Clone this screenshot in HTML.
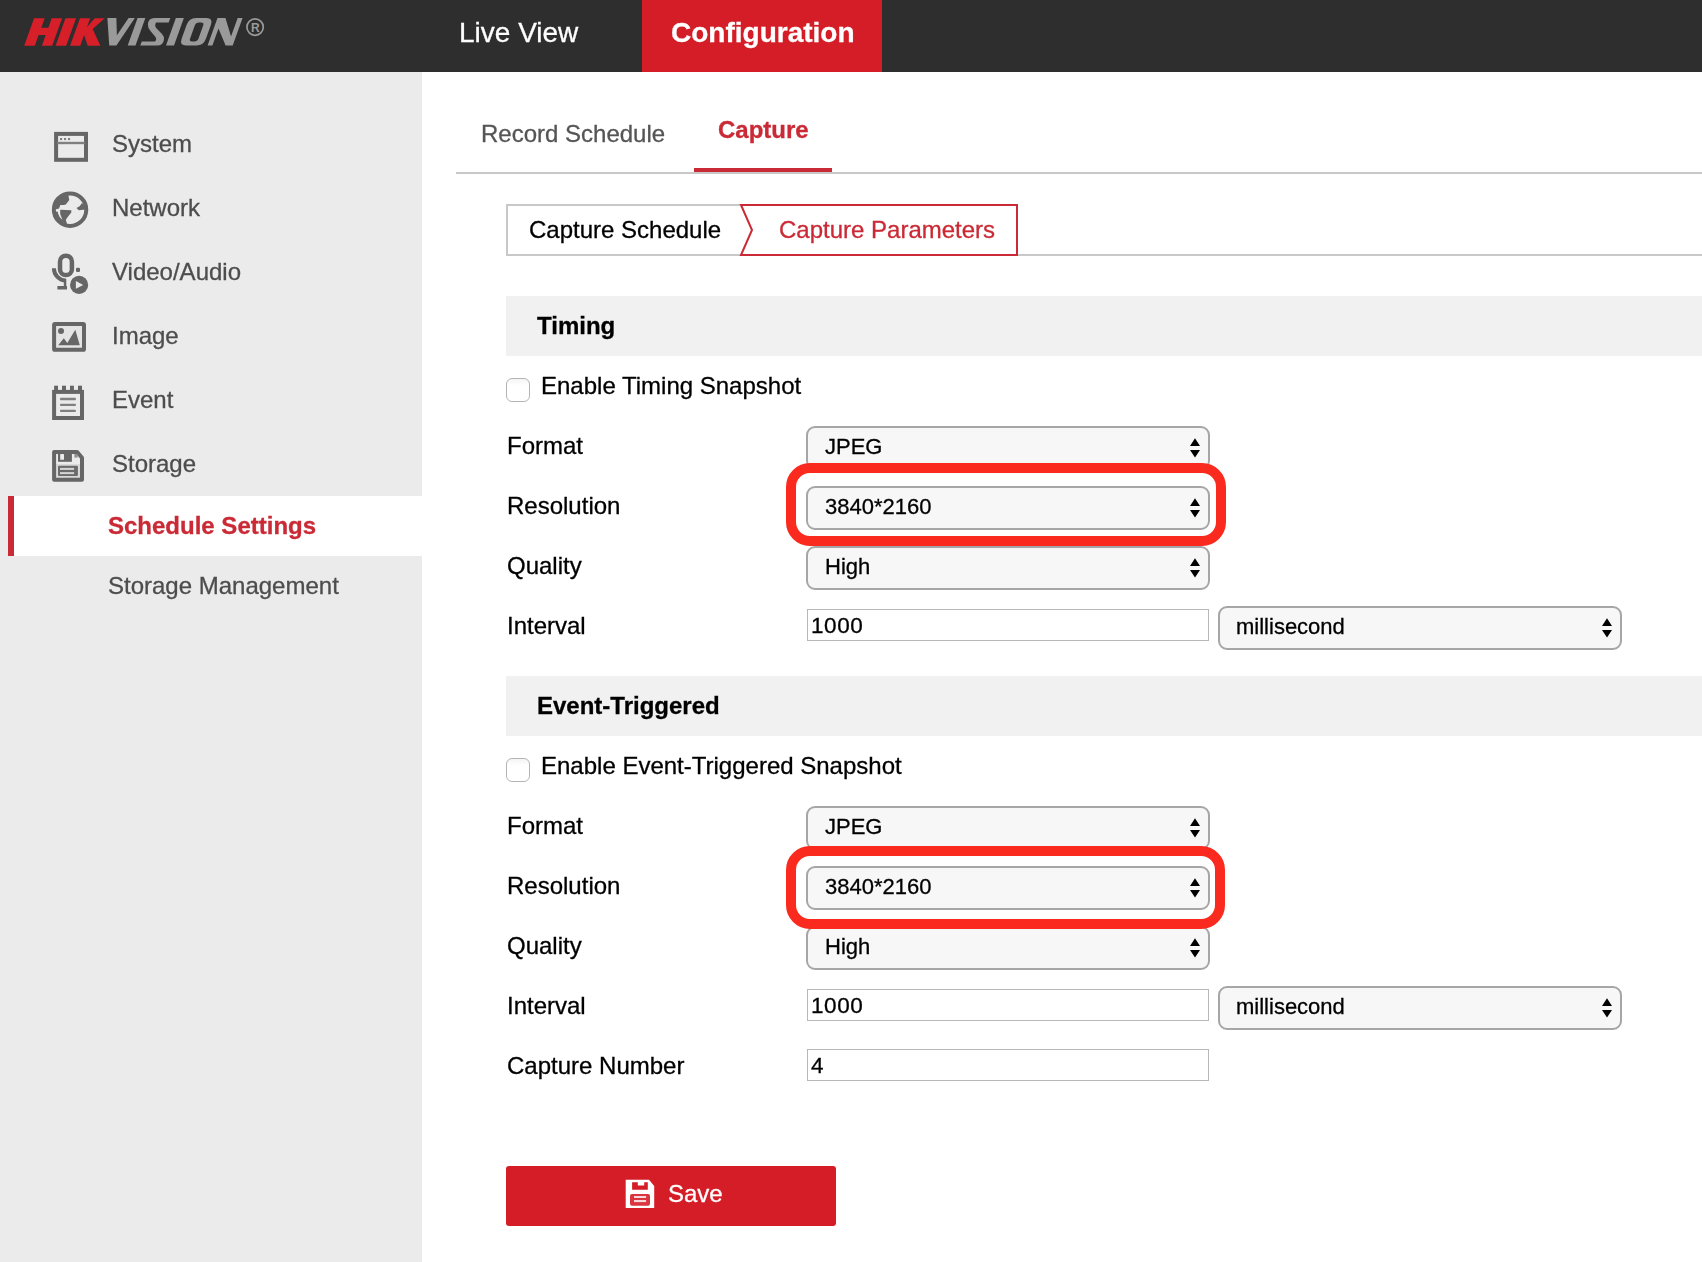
<!DOCTYPE html>
<html>
<head>
<meta charset="utf-8">
<title>Configuration</title>
<style>
*{box-sizing:border-box;margin:0;padding:0}
html,body{width:1702px;height:1262px;overflow:hidden;background:#fff}
body{font-family:"Liberation Sans",sans-serif;font-size:24px;color:#000;position:relative;-webkit-text-stroke:0.3px currentColor}
.abs{position:absolute}
.t{position:absolute;white-space:nowrap;line-height:30px;height:30px;will-change:transform}
.select .v,.input .v{will-change:transform}
#header{left:0;top:0;width:1702px;height:72px;background:#2e2e2e}
#cfgtab{left:642px;top:0;width:240px;height:72px;background:#d51d27}
#side{left:0;top:72px;width:422px;height:1190px;background:#ebebeb}
.nav{font-size:28px;color:#fff;line-height:34px;height:34px}
.sm{color:#4d4d4d}
.sel{left:14px;top:496px;width:408px;height:60px;background:#fff}
.selbar{left:8px;top:496px;width:6px;height:60px;background:#ca2a35}
.sec{left:506px;width:1196px;height:60px;background:#f1f1f1}
.sech{font-weight:bold;left:537px}
.lab{left:507px}
.select{position:absolute;height:44px;width:404px;border:2px solid #a6a6a6;border-radius:9px;background:#f7f7f7}
.select .v{position:absolute;left:17px;top:5px;font-size:22px;line-height:28px;white-space:nowrap}
.select svg{position:absolute;right:7px;top:10px}
.input{position:absolute;left:807px;width:402px;height:32px;border:1px solid #b8b8b8;background:#fff}
.input .v{position:absolute;left:2.5px;top:2px;font-size:22.5px;line-height:28px;letter-spacing:0.6px}
.cb{position:absolute;left:506px;width:24px;height:24px;border:1.5px solid #b4b4b4;border-radius:6px;background:linear-gradient(#f4f4f4,#fff 30%,#fff)}
.hl{position:absolute;left:786px;width:440px;height:83px;border:10px solid #fa2a1e;border-radius:24px}
</style>
</head>
<body>
<!-- header -->
<div id="header" class="abs"></div>
<div id="cfgtab" class="abs"></div>
<svg class="abs" style="left:0;top:0" width="300" height="72" viewBox="0 0 300 72">
  <g transform="matrix(1 0 0.359 -1 0 45.7)" fill="#d71f2a">
    <path d="M24.2 0 H34.8 V10.6 H41.9 V0 H52.2 V27.5 H41.9 V18 H34.8 V27.5 H24.2 Z"/>
    <path d="M55.6 0 H66.2 V27.5 H55.6 Z"/>
    <path d="M70.1 0 H80.3 V10.6 L87.7 0 H100.4 L86.7 16.6 L94.8 27.5 H84.9 L80.3 18.7 V27.5 H70.1 Z"/>
  </g>
  <g transform="matrix(1 0 0.359 -1 0 45.6)" fill="#9a9a9a">
    <path d="M97.5 27.5 H106.5 L113.2 10.3 L118.7 27.5 H125 L116.4 0 H109.25 Z"/>
    <path d="M127.7 0 H135.5 V27.5 H127.7 Z"/>
    <path d="M166 0 H174 V27.5 H166 Z"/>
    <path fill-rule="evenodd" d="M186.2 0 H196.5 Q203.5 0 203.5 7 V20.5 Q203.5 27.5 196.5 27.5 H186.2 Q179.2 27.5 179.2 20.5 V7 Q179.2 0 186.2 0 Z M190.6 4 Q187.6 4 187.6 7 V20 Q187.6 23 190.6 23 H193 Q196 23 196 20 V7 Q196 4 193 4 Z"/>
    <path d="M207.6 0 H212.4 V17 L225.6 0 H232.7 V27.5 H227.8 V9 L215.6 27.5 H207.6 Z"/>
  </g>
  <path fill="#9a9a9a" d="M170.3 18.1 L154.5 18.1 Q148.5 18.1 147.9 24.5 Q147.7 28 150.5 31 L155.5 36.9 Q157 39.5 155 41.6 L141.8 41.6 L140.2 45.6 L157 45.6 Q163.5 45.6 164 39 Q164.2 36.5 162 34 L156.1 27.9 Q154.3 25 156.1 22.6 L168.7 22.6 Z"/>
  <circle cx="255.1" cy="27.1" r="8.2" fill="none" stroke="#9a9a9a" stroke-width="1.7"/>
  <text x="255.4" y="31.9" text-anchor="middle" font-family="Liberation Sans" font-weight="bold" font-size="12" fill="#9a9a9a">R</text>
</svg>
<div class="t nav" style="left:459px;top:16px">Live View</div>
<div class="t nav" style="left:671px;top:16px;font-weight:bold">Configuration</div>

<!-- sidebar -->
<div id="side" class="abs"></div>
<div class="sel abs"></div><div class="selbar abs"></div>
<div class="t sm" style="left:112px;top:129px">System</div>
<div class="t sm" style="left:112px;top:193px">Network</div>
<div class="t sm" style="left:112px;top:257px">Video/Audio</div>
<div class="t sm" style="left:112px;top:321px">Image</div>
<div class="t sm" style="left:112px;top:385px">Event</div>
<div class="t sm" style="left:112px;top:449px">Storage</div>
<div class="t" style="left:108px;top:511px;font-weight:bold;color:#ca2a35">Schedule Settings</div>
<div class="t sm" style="left:108px;top:571px">Storage Management</div>

<!-- icons -->
<svg class="abs" style="left:40px;top:120px" width="60" height="50" viewBox="0 0 60 50">
  <rect x="16.1" y="13.9" width="29.9" height="25.9" fill="none" stroke="#666" stroke-width="4"/>
  <rect x="17" y="21.8" width="28" height="2.4" fill="#808080"/>
  <rect x="20" y="18" width="2.1" height="2.1" fill="#808080"/><rect x="24" y="18" width="2.1" height="2.1" fill="#808080"/><rect x="28" y="18" width="2.1" height="2.1" fill="#808080"/>
</svg>
<svg class="abs" style="left:40px;top:184px" width="60" height="50" viewBox="0 0 60 50">
  <circle cx="30.05" cy="25.7" r="16.2" fill="none" stroke="#666" stroke-width="4"/>
  <path d="M28 9.5 L29.3 15.9 L25.8 20.6 L23.6 21 L20.4 21 L19 24.6 L15 25.6 L14 28 L13 22 L16 14 L22 10 Z" fill="#666"/>
  <path d="M20.2 25.8 L31.3 26.2 L31.3 28.5 L27.7 32.9 L25.8 35.7 L27.2 40.5 L23.8 39.5 L20.2 30.1 Z" fill="#666"/>
  <path d="M16.48 27.61 A13.7 13.7 0 0 0 23.20 37.56" fill="none" stroke="#666" stroke-width="2.3"/>
  <path d="M36.5 24 L39.6 22.2 L42 19 L45 22 L45.5 25.6 L38.8 26.3 Z" fill="#666"/>
</svg>
<svg class="abs" style="left:40px;top:248px" width="60" height="50" viewBox="0 0 60 50">
  <rect x="20" y="7.7" width="11.9" height="19.4" rx="5.95" fill="none" stroke="#666" stroke-width="4.5"/>
  <path d="M13.9 20.2 A11.9 12.2 0 0 0 25.8 32.4" fill="none" stroke="#666" stroke-width="4"/>
  <path d="M23.8 31 H26.3 V38 H27 V41.6 H17.4 V38 H23.8 Z" fill="#666"/>
  <rect x="36" y="19.8" width="4" height="4.3" rx="1.3" fill="#666"/>
  <circle cx="39.1" cy="36.9" r="10.6" fill="#ebebeb"/>
  <circle cx="39.1" cy="36.9" r="9.1" fill="#666"/>
  <path d="M35.9 32.9 L43.2 36.9 L35.9 40.8 Z" fill="#ebebeb"/>
</svg>
<svg class="abs" style="left:40px;top:312px" width="60" height="50" viewBox="0 0 60 50">
  <rect x="14.1" y="11.9" width="29.9" height="25.9" rx="0.9" fill="#e4e4e4" stroke="#666" stroke-width="4"/>
  <circle cx="21" cy="19" r="3" fill="#666"/>
  <path d="M18.2 33.3 L23.8 26.2 L27.3 30.9 L35.3 17.8 L39.8 33.3 Z" fill="#666"/>
</svg>
<svg class="abs" style="left:40px;top:376px" width="60" height="50" viewBox="0 0 60 50">
  <rect x="14.1" y="15.9" width="27.9" height="26.1" fill="none" stroke="#666" stroke-width="4"/>
  <rect x="14.1" y="9.7" width="3.9" height="5" fill="#666"/><rect x="22" y="9.7" width="4" height="5" fill="#666"/><rect x="30" y="9.7" width="3.9" height="5" fill="#666"/><rect x="38" y="9.7" width="4" height="5" fill="#666"/>
  <rect x="20" y="21.8" width="15.9" height="2.4" rx="0.8" fill="#808080"/><rect x="20" y="27.7" width="15.9" height="2.4" rx="0.8" fill="#808080"/><rect x="20" y="33.8" width="15.9" height="2.3" rx="0.8" fill="#808080"/>
</svg>
<svg class="abs" style="left:40px;top:440px" width="60" height="50" viewBox="0 0 60 50">
  <path d="M15.9 24 H40 V38 H15.9 Z" fill="#d9d9d9"/>
  <path d="M14.1 11.9 H37 L42 17.8 V39.8 H14.1 Z" fill="none" stroke="#666" stroke-width="4" stroke-linejoin="round"/>
  <path d="M18 12 H31.9 V21.8 H18 Z" fill="#666"/>
  <rect x="20.2" y="14" width="3.8" height="5.8" rx="0.6" fill="#ebebeb"/>
  <path d="M34.4 14 H37.6 V17.6 H34.4 Z" fill="#8f8f8f"/>
  <rect x="18" y="25.8" width="19.9" height="10.1" rx="0.8" fill="#6b6b6b"/>
  <rect x="20" y="27.9" width="14.1" height="2" fill="#d4d4d4"/><rect x="20" y="32.1" width="14.1" height="2" fill="#d4d4d4"/>
</svg>
<!-- tabs -->
<div class="t" style="left:481px;top:119px;color:#555">Record Schedule</div>
<div class="t" style="left:718px;top:115px;color:#ca2a35;font-weight:bold">Capture</div>
<div class="abs" style="left:456px;top:172px;width:1246px;height:2px;background:#c8c8c8"></div>
<div class="abs" style="left:694px;top:168px;width:138px;height:4px;background:#ca2a35"></div>

<!-- sub tabs -->
<div class="abs" style="left:506px;top:204px;width:240px;height:52px;border:2px solid #c8c8c8;border-right:none"></div>
<div class="abs" style="left:1018px;top:254px;width:684px;height:2px;background:#c8c8c8"></div>
<div class="abs" style="left:740px;top:204px;width:278px;height:52px;border:2px solid #ca2a35;border-left:none;background:#fff"></div>
<svg class="abs" style="left:736px;top:204px" width="24" height="52" viewBox="0 0 24 52"><path d="M4 0 L24 0 L24 52 L4 52 Z" fill="#fff"/><path d="M24 1 L5 1 L16 26 L5 51 L24 51" fill="none" stroke="#ca2a35" stroke-width="2" stroke-linejoin="miter"/></svg>
<div class="t" style="left:529px;top:215px">Capture Schedule</div>
<div class="t" style="left:779px;top:215px;color:#ca2a35">Capture Parameters</div>

<!-- Timing -->
<div class="sec abs" style="top:296px"></div>
<div class="t sech" style="top:311px">Timing</div>
<div class="cb" style="top:378px"></div>
<div class="t" style="left:541px;top:371px">Enable Timing Snapshot</div>
<div class="t lab" style="top:431px">Format</div>
<div class="t lab" style="top:491px">Resolution</div>
<div class="t lab" style="top:551px">Quality</div>
<div class="t lab" style="top:611px">Interval</div>

<!-- Event -->
<div class="sec abs" style="top:676px"></div>
<div class="t sech" style="top:691px">Event-Triggered</div>
<div class="cb" style="top:758px"></div>
<div class="t" style="left:541px;top:751px">Enable Event-Triggered Snapshot</div>
<div class="t lab" style="top:811px">Format</div>
<div class="t lab" style="top:871px">Resolution</div>
<div class="t lab" style="top:931px">Quality</div>
<div class="t lab" style="top:991px">Interval</div>
<div class="t lab" style="top:1051px">Capture Number</div>

<!-- controls -->
<div class="select" style="left:806px;top:426px"><span class="v">JPEG</span><svg width="12" height="22" viewBox="0 0 12 22"><path d="M1 7.9 L6 0.3 L11 7.9 Z M1 12 L11 12 L6 19.4 Z" fill="#000"/></svg></div>
<div class="select" style="left:806px;top:486px"><span class="v">3840*2160</span><svg width="12" height="22" viewBox="0 0 12 22"><path d="M1 7.9 L6 0.3 L11 7.9 Z M1 12 L11 12 L6 19.4 Z" fill="#000"/></svg></div>
<div class="select" style="left:806px;top:546px"><span class="v">High</span><svg width="12" height="22" viewBox="0 0 12 22"><path d="M1 7.9 L6 0.3 L11 7.9 Z M1 12 L11 12 L6 19.4 Z" fill="#000"/></svg></div>
<div class="input" style="top:609px"><span class="v">1000</span></div>
<div class="select" style="left:1218px;top:606px"><span class="v" style="left:15.6px">millisecond</span><svg width="12" height="22" viewBox="0 0 12 22"><path d="M1 7.9 L6 0.3 L11 7.9 Z M1 12 L11 12 L6 19.4 Z" fill="#000"/></svg></div>
<div class="hl" style="top:463px"></div>
<div class="select" style="left:806px;top:806px"><span class="v">JPEG</span><svg width="12" height="22" viewBox="0 0 12 22"><path d="M1 7.9 L6 0.3 L11 7.9 Z M1 12 L11 12 L6 19.4 Z" fill="#000"/></svg></div>
<div class="select" style="left:806px;top:866px"><span class="v">3840*2160</span><svg width="12" height="22" viewBox="0 0 12 22"><path d="M1 7.9 L6 0.3 L11 7.9 Z M1 12 L11 12 L6 19.4 Z" fill="#000"/></svg></div>
<div class="select" style="left:806px;top:926px"><span class="v">High</span><svg width="12" height="22" viewBox="0 0 12 22"><path d="M1 7.9 L6 0.3 L11 7.9 Z M1 12 L11 12 L6 19.4 Z" fill="#000"/></svg></div>
<div class="input" style="top:989px"><span class="v">1000</span></div>
<div class="select" style="left:1218px;top:986px"><span class="v" style="left:15.6px">millisecond</span><svg width="12" height="22" viewBox="0 0 12 22"><path d="M1 7.9 L6 0.3 L11 7.9 Z M1 12 L11 12 L6 19.4 Z" fill="#000"/></svg></div>
<div class="hl" style="top:846px;width:439px"></div>
<div class="input" style="top:1049px"><span class="v">4</span></div>
<!-- Save -->
<div class="abs" style="left:506px;top:1166px;width:330px;height:60px;background:#d51d27;border-radius:3px"></div>
<svg class="abs" style="left:610px;top:1166px" width="60" height="60" viewBox="0 0 60 60">
  <path d="M15.7 13.8 H39 L44.2 20 V42.1 H15.7 Z" fill="#fff"/>
  <path d="M22.1 16.2 H27.8 V19.6 H34.2 V16.2 H37.8 V23.8 H22.1 Z" fill="#d51d27"/>
  <rect x="20" y="28" width="20" height="11.7" rx="2" fill="#da3540"/>
  <rect x="24" y="30" width="12.1" height="2" fill="#f6d8da"/><rect x="24" y="34" width="12.1" height="2.1" fill="#f6d8da"/>
</svg>
<div class="t" style="left:668px;top:1179px;color:#fff">Save</div>
</body>
</html>
